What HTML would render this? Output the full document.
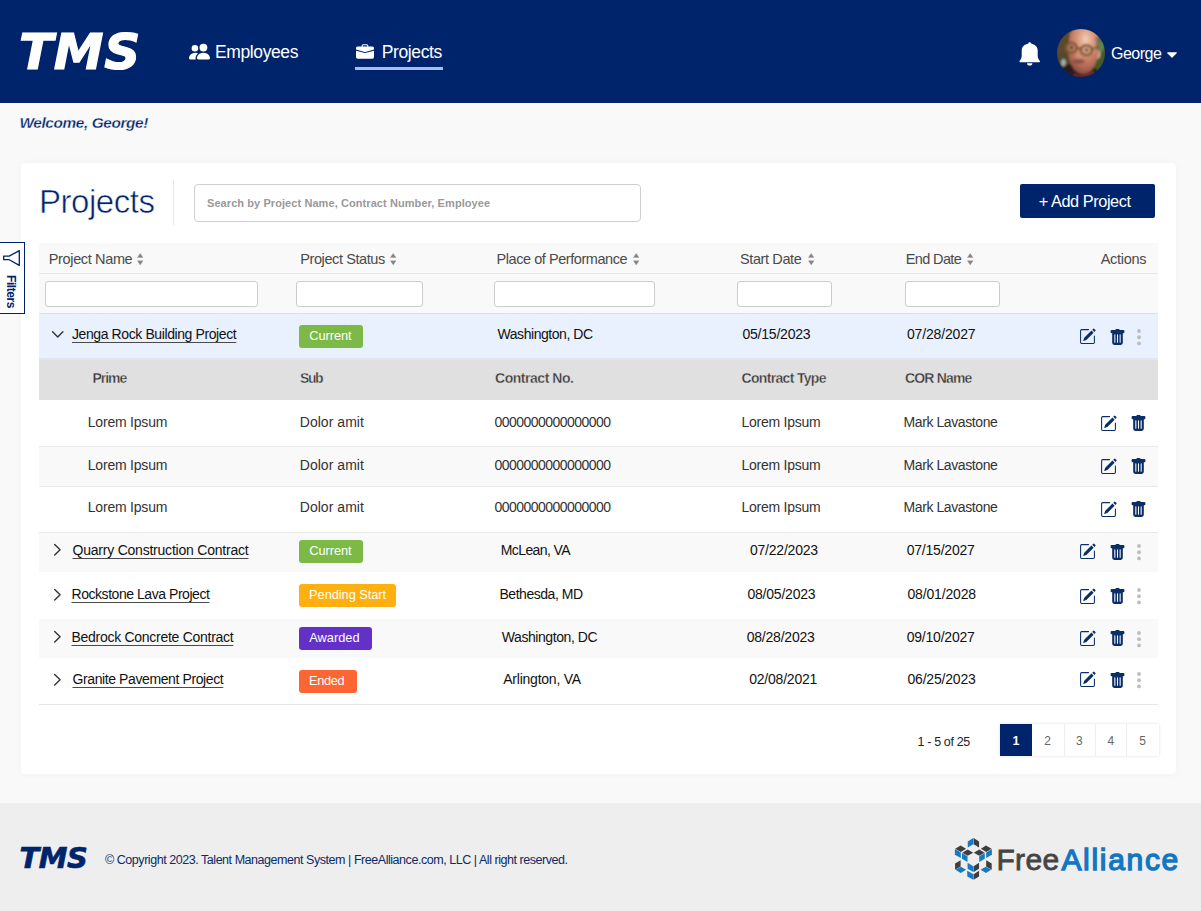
<!DOCTYPE html>
<html lang="en">
<head>
<meta charset="utf-8">
<title>TMS - Projects</title>
<style>
*{box-sizing:border-box;margin:0;padding:0}
html,body{width:1201px;height:911px;overflow:hidden}
body{position:relative;background:#f9f9f9;font-family:"Liberation Sans","DejaVu Sans",sans-serif}
.t{position:absolute;white-space:nowrap;line-height:20px;height:20px}
.lnk{text-decoration:underline;text-decoration-thickness:1px;text-underline-offset:3px;text-decoration-color:#4a4a4a}
.b{position:absolute}
svg{position:absolute;overflow:visible}
</style>
</head>
<body>
<div id="shapes">
<div class="b" style="left:0px;top:0px;width:1201px;height:103px;background:#00246b"></div>
<div class="b" style="left:355px;top:67px;width:88px;height:3px;background:#a9bcf0"></div>
<svg style="left:189.2px;top:41.1px" width="21" height="21" viewBox="0 0 16 16" fill="#fff"><path d="M7 14s-1 0-1-1 1-4 5-4 5 3 5 4-1 1-1 1H7Zm4-6a3 3 0 1 0 0-6 3 3 0 0 0 0 6Zm-5.784 6A2.238 2.238 0 0 1 5 13c0-1.355.68-2.750 1.936-3.720A6.325 6.325 0 0 0 5 9c-4 0-5 3-5 4s1 1 1 1h4.216ZM4.500 8a2.500 2.500 0 1 0 0-5 2.500 2.500 0 0 0 0 5Z"/></svg>
<svg style="left:355.500px;top:42.500px" width="18" height="18" viewBox="0 0 16 16" fill="#fff"><path d="M6.500 1A1.500 1.500 0 0 0 5 2.500V3H1.500A1.500 1.500 0 0 0 0 4.500v1.384l7.614 2.030a1.500 1.500 0 0 0 .772 0L16 5.884V4.500A1.500 1.500 0 0 0 14.500 3H11v-.5A1.500 1.500 0 0 0 9.500 1h-3zm0 1h3a.5.5 0 0 1 .5.5V3H6v-.5a.5.5 0 0 1 .5-.5z"/><path d="M0 12.500A1.500 1.500 0 0 0 1.500 14h13a1.500 1.500 0 0 0 1.500-1.500V6.850L8.129 8.947a.5.5 0 0 1-.258 0L0 6.850v5.650z"/></svg>
<svg style="left:1018px;top:40px" width="24" height="27" viewBox="0 0 24 27" fill="#fff"><path d="M11.700 2.300C12.500 2.300 13 2.800 13.100 3.400C16.800 4.300 19.700 6.500 19.700 10.600V16C19.700 17.800 20.500 19.400 21.800 21C22.300 21.600 22 22.200 21.300 22.200H2.100C1.400 22.200 1.100 21.600 1.600 21C2.900 19.400 3.700 17.800 3.700 16V10.600C3.700 6.500 6.600 4.300 10.300 3.400C10.400 2.800 10.900 2.300 11.700 2.300Z"/><path d="M9 23.300H14.400C14.400 24.700 13.200 25.600 11.700 25.600C10.200 25.600 9 24.700 9 23.300Z"/></svg>
<svg style="left:1057px;top:28.800px" width="48" height="48" viewBox="0 0 48 48">
<defs><clipPath id="av"><circle cx="24" cy="24" r="24"/></clipPath>
<filter id="bl" x="-10%" y="-10%" width="120%" height="120%"><feGaussianBlur stdDeviation="0.900"/></filter>
<radialGradient id="fg" cx="58%" cy="28%" r="75%"><stop offset="0" stop-color="#f3cdb6"/><stop offset="0.350" stop-color="#d9987c"/><stop offset="0.750" stop-color="#b56a55"/><stop offset="1" stop-color="#8a4a3c"/></radialGradient></defs>
<g clip-path="url(#av)"><g filter="url(#bl)">
<rect x="-4" y="-4" width="56" height="56" fill="#4d4a2e"/>
<rect x="-4" y="-4" width="16" height="30" fill="#5a4a2c"/>
<rect x="36" y="4" width="16" height="40" fill="#3f5a2c"/>
<ellipse cx="44.500" cy="17" rx="2.500" ry="6" fill="#5f8a48"/>
<ellipse cx="6.500" cy="33.500" rx="2.200" ry="3.500" fill="#aab0a8"/>
<ellipse cx="40.500" cy="25" rx="3" ry="5" fill="#d9a58c"/>
<path d="M10.500 14C10.500 4 17-3 27-3S42.500 4 42 15C41.500 26 40 33 36 39C33 43.500 29 45 25.500 45C21 45 16 42 13.500 35C11.500 29 10.500 22 10.500 14Z" fill="url(#fg)"/>
<path d="M40 8C42 12 42.500 17 42 22L39.500 21C40 16 39.500 12 38 9Z" fill="#7a6a60"/>
<path d="M10.500 6C9.500 10 9.500 14 10 18L12 17C11.500 13 12 9 13 6Z" fill="#5a4038"/>
<path d="M4 40C8 36 12 34.500 14 35C16 41 21 45 26 45C30 45 34 43 36.500 39C40 40 43 42 45 45V52H0Z" fill="#2a1b1a"/>
<path d="M17 44C21 46.500 30 46.500 36.500 41L38 48H16Z" fill="#6c2a2a"/>
<ellipse cx="21.500" cy="32.500" rx="6.500" ry="2.200" fill="#8a5144"/>
<ellipse cx="22" cy="27" rx="3.200" ry="2.200" fill="#d08e78"/>
<ellipse cx="14.200" cy="18.700" rx="5.600" ry="5" fill="#a87a62" fill-opacity=".55" stroke="#7a5526" stroke-width="2.200"/>
<ellipse cx="29.400" cy="21.200" rx="5.600" ry="5" fill="#c69a84" fill-opacity=".55" stroke="#7a5526" stroke-width="2.200"/>
<path d="M19.800 19.500Q22 18.500 23.800 20.500" stroke="#6a4520" stroke-width="1.800" fill="none"/>
<path d="M35 20.500L41.500 17" stroke="#7a5526" stroke-width="1.500"/>
<circle cx="14.500" cy="18.500" r="1.400" fill="#3a2a22"/><circle cx="29.500" cy="21" r="1.400" fill="#3a2a22"/>
</g></g></svg>
<svg style="left:1167.400px;top:52.400px" width="10" height="6" viewBox="0 0 10 6"><path d="M0.700 0.300h8.600a.5.5 0 0 1 .4.850L5.450 5.500a.6.600 0 0 1-.9 0L0.300 1.150a.5.5 0 0 1 .4-.85z" fill="#fff"/></svg>
<div class="b" style="left:21px;top:163px;width:1155px;height:611px;background:#fff;border-radius:4px;box-shadow:0 0 9px rgba(0,0,0,.035)"></div>
<div class="b" style="left:173px;top:180px;width:1px;height:45px;background:#e8e8e8"></div>
<div class="b" style="left:194px;top:184px;width:447px;height:38px;background:#fff;border:1px solid #cfcfcf;border-radius:4px"></div>
<div class="b" style="left:1020px;top:184px;width:135px;height:34px;background:#00246b;border-radius:2px"></div>
<div class="b" style="left:-1px;top:242px;width:26px;height:72px;background:#fff;border:1px solid #00246b"></div>
<svg style="left:3px;top:250px" width="17" height="16" viewBox="0 0 17 16" fill="none" stroke="#00246b" stroke-width="1.300" stroke-linejoin="round" stroke-linecap="round"><path d="M16.300 0.600V15.400L6.200 9.700H0.700V6.100H6.200Z"/></svg>
<div class="t" style="left:1px;top:274.500px;width:20px;height:34px;writing-mode:vertical-rl;font-size:12px;font-weight:bold;color:#00246b;line-height:20px;letter-spacing:-0.450px" id="filt">Filters</div>
<div class="b" style="left:39px;top:243px;width:1119px;height:31px;background:#f9f9f9;border-bottom:1px solid #e6e6e6"></div>
<div class="b" style="left:39px;top:274px;width:1119px;height:40px;background:#f9f9f9;border-bottom:1px solid #dedede"></div>
<div class="b" style="left:39px;top:314px;width:1119px;height:46px;background:#e9f0fe;border-bottom:2px solid #dfe6f3"></div>
<div class="b" style="left:39px;top:360px;width:1119px;height:40px;background:#e0e0e0"></div>
<div class="b" style="left:39px;top:400px;width:1119px;height:47px;background:#fff;border-bottom:1px solid #e9e9e9"></div>
<div class="b" style="left:39px;top:447px;width:1119px;height:40px;background:#f9f9f9;border-bottom:1px solid #e9e9e9"></div>
<div class="b" style="left:39px;top:487px;width:1119px;height:46px;background:#fff;border-bottom:1px solid #e9e9e9"></div>
<div class="b" style="left:39px;top:533px;width:1119px;height:39px;background:#f9f9f9"></div>
<div class="b" style="left:39px;top:572px;width:1119px;height:47px;background:#fff"></div>
<div class="b" style="left:39px;top:619px;width:1119px;height:39px;background:#f9f9f9"></div>
<div class="b" style="left:39px;top:658px;width:1119px;height:47px;background:#fff;border-bottom:1px solid #e6e6e6"></div>
<svg style="left:137.2px;top:253.100px" width="6.400" height="12.300" viewBox="0 0 6.400 12.300" fill="#858585" stroke="#858585" stroke-width="0.300" stroke-linejoin="round"><path d="M3.200 0.400L6 4.500H0.400Z"/><path d="M3.200 11.900L6 7.800H0.400Z"/></svg>
<svg style="left:390.2px;top:253.100px" width="6.400" height="12.300" viewBox="0 0 6.400 12.300" fill="#858585" stroke="#858585" stroke-width="0.300" stroke-linejoin="round"><path d="M3.200 0.400L6 4.500H0.400Z"/><path d="M3.200 11.900L6 7.800H0.400Z"/></svg>
<svg style="left:633.4px;top:253.100px" width="6.400" height="12.300" viewBox="0 0 6.400 12.300" fill="#858585" stroke="#858585" stroke-width="0.300" stroke-linejoin="round"><path d="M3.200 0.400L6 4.500H0.400Z"/><path d="M3.200 11.900L6 7.800H0.400Z"/></svg>
<svg style="left:807.6px;top:253.100px" width="6.400" height="12.300" viewBox="0 0 6.400 12.300" fill="#858585" stroke="#858585" stroke-width="0.300" stroke-linejoin="round"><path d="M3.200 0.400L6 4.500H0.400Z"/><path d="M3.200 11.900L6 7.800H0.400Z"/></svg>
<svg style="left:967.1px;top:253.100px" width="6.400" height="12.300" viewBox="0 0 6.400 12.300" fill="#858585" stroke="#858585" stroke-width="0.300" stroke-linejoin="round"><path d="M3.200 0.400L6 4.500H0.400Z"/><path d="M3.200 11.900L6 7.800H0.400Z"/></svg>
<div class="b" style="left:45px;top:281px;width:213px;height:26px;background:#fff;border:1px solid #ccc;border-radius:3px"></div>
<div class="b" style="left:296px;top:281px;width:127px;height:26px;background:#fff;border:1px solid #ccc;border-radius:3px"></div>
<div class="b" style="left:494px;top:281px;width:161px;height:26px;background:#fff;border:1px solid #ccc;border-radius:3px"></div>
<div class="b" style="left:737px;top:281px;width:95px;height:26px;background:#fff;border:1px solid #ccc;border-radius:3px"></div>
<div class="b" style="left:905px;top:281px;width:95px;height:26px;background:#fff;border:1px solid #ccc;border-radius:3px"></div>
<svg style="left:52px;top:331px" width="11.500" height="7" viewBox="0 0 11.500 7" fill="none" stroke="#333" stroke-width="1.400" stroke-linecap="round" stroke-linejoin="round"><path d="M0.600 0.700L5.750 6.100L10.900 0.700"/></svg>
<svg style="left:53.800px;top:544.45px" width="7" height="11.500" viewBox="0 0 7 11.500" fill="none" stroke="#333" stroke-width="1.400" stroke-linecap="round" stroke-linejoin="round"><path d="M0.700 0.600L6.100 5.750L0.700 10.900"/></svg>
<svg style="left:53.800px;top:588.75px" width="7" height="11.500" viewBox="0 0 7 11.500" fill="none" stroke="#333" stroke-width="1.400" stroke-linecap="round" stroke-linejoin="round"><path d="M0.700 0.600L6.100 5.750L0.700 10.900"/></svg>
<svg style="left:53.800px;top:631.45px" width="7" height="11.500" viewBox="0 0 7 11.500" fill="none" stroke="#333" stroke-width="1.400" stroke-linecap="round" stroke-linejoin="round"><path d="M0.700 0.600L6.100 5.750L0.700 10.900"/></svg>
<svg style="left:53.800px;top:673.75px" width="7" height="11.500" viewBox="0 0 7 11.500" fill="none" stroke="#333" stroke-width="1.400" stroke-linecap="round" stroke-linejoin="round"><path d="M0.700 0.600L6.100 5.750L0.700 10.900"/></svg>
<div class="b" style="left:299px;top:325px;width:64px;height:23px;background:#7cb947;border-radius:3px"></div>
<div class="b" style="left:299px;top:540px;width:64px;height:23px;background:#7cb947;border-radius:3px"></div>
<div class="b" style="left:299px;top:584px;width:96.5px;height:23px;background:#fdb00f;border-radius:3px"></div>
<div class="b" style="left:299px;top:627px;width:72.8px;height:23px;background:#6431c8;border-radius:3px"></div>
<div class="b" style="left:299px;top:670px;width:57.5px;height:23px;background:#fd6533;border-radius:3px"></div>
<svg style="left:1078.9px;top:328.25px" width="17" height="17" viewBox="0 0 16 16" fill="#0a2f66"><path d="M15.502 1.940a.5.5 0 0 1 0 .706L14.459 3.690l-2-2L13.502.646a.5.5 0 0 1 .707 0l1.293 1.293zm-1.750 2.456-2-2L4.939 9.210a.5.5 0 0 0-.121.196l-.805 2.414a.25.250 0 0 0 .316.316l2.414-.805a.5.5 0 0 0 .196-.120l6.813-6.814z"/><path fill-rule="evenodd" d="M1 13.500A1.500 1.500 0 0 0 2.500 15h11a1.500 1.500 0 0 0 1.500-1.500v-6a.5.5 0 0 0-1 0v6a.5.5 0 0 1-.5.5h-11a.5.5 0 0 1-.5-.5v-11a.5.5 0 0 1 .5-.5H9a.5.5 0 0 0 0-1H2.500A1.500 1.500 0 0 0 1 2.500v11z"/></svg>
<svg style="left:1108.7px;top:328.65px" width="17" height="17" viewBox="0 0 16 16" fill="#0a2f66"><path d="M2.500 1a1 1 0 0 0-1 1v1a1 1 0 0 0 1 1H3v9a2 2 0 0 0 2 2h6a2 2 0 0 0 2-2V4h.5a1 1 0 0 0 1-1V2a1 1 0 0 0-1-1H10a1 1 0 0 0-1-1H7a1 1 0 0 0-1 1H2.500zm3 4a.5.5 0 0 1 .5.5v7a.5.5 0 0 1-1 0v-7a.5.5 0 0 1 .5-.5zM8 5a.5.5 0 0 1 .5.5v7a.5.5 0 0 1-1 0v-7A.5.5 0 0 1 8 5zm3 .5v7a.5.5 0 0 1-1 0v-7a.5.5 0 0 1 1 0z"/></svg>
<svg style="left:1137px;top:328.75px" width="4" height="16.500" viewBox="0 0 4 16.500" fill="#bdbdbd"><circle cx="2" cy="2" r="1.900"/><circle cx="2" cy="8.250" r="1.900"/><circle cx="2" cy="14.400" r="1.900"/></svg>
<svg style="left:1100.2px;top:415.00px" width="17" height="17" viewBox="0 0 16 16" fill="#0a2f66"><path d="M15.502 1.940a.5.5 0 0 1 0 .706L14.459 3.690l-2-2L13.502.646a.5.5 0 0 1 .707 0l1.293 1.293zm-1.750 2.456-2-2L4.939 9.210a.5.5 0 0 0-.121.196l-.805 2.414a.25.250 0 0 0 .316.316l2.414-.805a.5.5 0 0 0 .196-.120l6.813-6.814z"/><path fill-rule="evenodd" d="M1 13.500A1.500 1.500 0 0 0 2.500 15h11a1.500 1.500 0 0 0 1.500-1.500v-6a.5.5 0 0 0-1 0v6a.5.5 0 0 1-.5.5h-11a.5.5 0 0 1-.5-.5v-11a.5.5 0 0 1 .5-.5H9a.5.5 0 0 0 0-1H2.500A1.500 1.500 0 0 0 1 2.500v11z"/></svg>
<svg style="left:1129.5px;top:415.40px" width="17" height="17" viewBox="0 0 16 16" fill="#0a2f66"><path d="M2.500 1a1 1 0 0 0-1 1v1a1 1 0 0 0 1 1H3v9a2 2 0 0 0 2 2h6a2 2 0 0 0 2-2V4h.5a1 1 0 0 0 1-1V2a1 1 0 0 0-1-1H10a1 1 0 0 0-1-1H7a1 1 0 0 0-1 1H2.500zm3 4a.5.5 0 0 1 .5.5v7a.5.5 0 0 1-1 0v-7a.5.5 0 0 1 .5-.5zM8 5a.5.5 0 0 1 .5.5v7a.5.5 0 0 1-1 0v-7A.5.5 0 0 1 8 5zm3 .5v7a.5.5 0 0 1-1 0v-7a.5.5 0 0 1 1 0z"/></svg>
<svg style="left:1100.2px;top:458.00px" width="17" height="17" viewBox="0 0 16 16" fill="#0a2f66"><path d="M15.502 1.940a.5.5 0 0 1 0 .706L14.459 3.690l-2-2L13.502.646a.5.5 0 0 1 .707 0l1.293 1.293zm-1.750 2.456-2-2L4.939 9.210a.5.5 0 0 0-.121.196l-.805 2.414a.25.250 0 0 0 .316.316l2.414-.805a.5.5 0 0 0 .196-.120l6.813-6.814z"/><path fill-rule="evenodd" d="M1 13.500A1.500 1.500 0 0 0 2.500 15h11a1.500 1.500 0 0 0 1.500-1.500v-6a.5.5 0 0 0-1 0v6a.5.5 0 0 1-.5.5h-11a.5.5 0 0 1-.5-.5v-11a.5.5 0 0 1 .5-.5H9a.5.5 0 0 0 0-1H2.500A1.500 1.500 0 0 0 1 2.500v11z"/></svg>
<svg style="left:1129.5px;top:458.40px" width="17" height="17" viewBox="0 0 16 16" fill="#0a2f66"><path d="M2.500 1a1 1 0 0 0-1 1v1a1 1 0 0 0 1 1H3v9a2 2 0 0 0 2 2h6a2 2 0 0 0 2-2V4h.5a1 1 0 0 0 1-1V2a1 1 0 0 0-1-1H10a1 1 0 0 0-1-1H7a1 1 0 0 0-1 1H2.500zm3 4a.5.5 0 0 1 .5.5v7a.5.5 0 0 1-1 0v-7a.5.5 0 0 1 .5-.5zM8 5a.5.5 0 0 1 .5.5v7a.5.5 0 0 1-1 0v-7A.5.5 0 0 1 8 5zm3 .5v7a.5.5 0 0 1-1 0v-7a.5.5 0 0 1 1 0z"/></svg>
<svg style="left:1100.2px;top:500.90px" width="17" height="17" viewBox="0 0 16 16" fill="#0a2f66"><path d="M15.502 1.940a.5.5 0 0 1 0 .706L14.459 3.690l-2-2L13.502.646a.5.5 0 0 1 .707 0l1.293 1.293zm-1.750 2.456-2-2L4.939 9.210a.5.5 0 0 0-.121.196l-.805 2.414a.25.250 0 0 0 .316.316l2.414-.805a.5.5 0 0 0 .196-.120l6.813-6.814z"/><path fill-rule="evenodd" d="M1 13.500A1.500 1.500 0 0 0 2.500 15h11a1.500 1.500 0 0 0 1.500-1.500v-6a.5.5 0 0 0-1 0v6a.5.5 0 0 1-.5.5h-11a.5.5 0 0 1-.5-.5v-11a.5.5 0 0 1 .5-.5H9a.5.5 0 0 0 0-1H2.500A1.500 1.500 0 0 0 1 2.500v11z"/></svg>
<svg style="left:1129.5px;top:501.30px" width="17" height="17" viewBox="0 0 16 16" fill="#0a2f66"><path d="M2.500 1a1 1 0 0 0-1 1v1a1 1 0 0 0 1 1H3v9a2 2 0 0 0 2 2h6a2 2 0 0 0 2-2V4h.5a1 1 0 0 0 1-1V2a1 1 0 0 0-1-1H10a1 1 0 0 0-1-1H7a1 1 0 0 0-1 1H2.500zm3 4a.5.5 0 0 1 .5.5v7a.5.5 0 0 1-1 0v-7a.5.5 0 0 1 .5-.5zM8 5a.5.5 0 0 1 .5.5v7a.5.5 0 0 1-1 0v-7A.5.5 0 0 1 8 5zm3 .5v7a.5.5 0 0 1-1 0v-7a.5.5 0 0 1 1 0z"/></svg>
<svg style="left:1078.9px;top:543.25px" width="17" height="17" viewBox="0 0 16 16" fill="#0a2f66"><path d="M15.502 1.940a.5.5 0 0 1 0 .706L14.459 3.690l-2-2L13.502.646a.5.5 0 0 1 .707 0l1.293 1.293zm-1.750 2.456-2-2L4.939 9.210a.5.5 0 0 0-.121.196l-.805 2.414a.25.250 0 0 0 .316.316l2.414-.805a.5.5 0 0 0 .196-.120l6.813-6.814z"/><path fill-rule="evenodd" d="M1 13.500A1.500 1.500 0 0 0 2.500 15h11a1.500 1.500 0 0 0 1.500-1.500v-6a.5.5 0 0 0-1 0v6a.5.5 0 0 1-.5.5h-11a.5.5 0 0 1-.5-.5v-11a.5.5 0 0 1 .5-.5H9a.5.5 0 0 0 0-1H2.500A1.500 1.500 0 0 0 1 2.500v11z"/></svg>
<svg style="left:1108.7px;top:543.65px" width="17" height="17" viewBox="0 0 16 16" fill="#0a2f66"><path d="M2.500 1a1 1 0 0 0-1 1v1a1 1 0 0 0 1 1H3v9a2 2 0 0 0 2 2h6a2 2 0 0 0 2-2V4h.5a1 1 0 0 0 1-1V2a1 1 0 0 0-1-1H10a1 1 0 0 0-1-1H7a1 1 0 0 0-1 1H2.500zm3 4a.5.5 0 0 1 .5.5v7a.5.5 0 0 1-1 0v-7a.5.5 0 0 1 .5-.5zM8 5a.5.5 0 0 1 .5.5v7a.5.5 0 0 1-1 0v-7A.5.5 0 0 1 8 5zm3 .5v7a.5.5 0 0 1-1 0v-7a.5.5 0 0 1 1 0z"/></svg>
<svg style="left:1137px;top:543.75px" width="4" height="16.500" viewBox="0 0 4 16.500" fill="#bdbdbd"><circle cx="2" cy="2" r="1.900"/><circle cx="2" cy="8.250" r="1.900"/><circle cx="2" cy="14.400" r="1.900"/></svg>
<svg style="left:1078.9px;top:587.75px" width="17" height="17" viewBox="0 0 16 16" fill="#0a2f66"><path d="M15.502 1.940a.5.5 0 0 1 0 .706L14.459 3.690l-2-2L13.502.646a.5.5 0 0 1 .707 0l1.293 1.293zm-1.750 2.456-2-2L4.939 9.210a.5.5 0 0 0-.121.196l-.805 2.414a.25.250 0 0 0 .316.316l2.414-.805a.5.5 0 0 0 .196-.120l6.813-6.814z"/><path fill-rule="evenodd" d="M1 13.500A1.500 1.500 0 0 0 2.500 15h11a1.500 1.500 0 0 0 1.500-1.500v-6a.5.5 0 0 0-1 0v6a.5.5 0 0 1-.5.5h-11a.5.5 0 0 1-.5-.5v-11a.5.5 0 0 1 .5-.5H9a.5.5 0 0 0 0-1H2.500A1.500 1.500 0 0 0 1 2.500v11z"/></svg>
<svg style="left:1108.7px;top:588.15px" width="17" height="17" viewBox="0 0 16 16" fill="#0a2f66"><path d="M2.500 1a1 1 0 0 0-1 1v1a1 1 0 0 0 1 1H3v9a2 2 0 0 0 2 2h6a2 2 0 0 0 2-2V4h.5a1 1 0 0 0 1-1V2a1 1 0 0 0-1-1H10a1 1 0 0 0-1-1H7a1 1 0 0 0-1 1H2.500zm3 4a.5.5 0 0 1 .5.5v7a.5.5 0 0 1-1 0v-7a.5.5 0 0 1 .5-.5zM8 5a.5.5 0 0 1 .5.5v7a.5.5 0 0 1-1 0v-7A.5.5 0 0 1 8 5zm3 .5v7a.5.5 0 0 1-1 0v-7a.5.5 0 0 1 1 0z"/></svg>
<svg style="left:1137px;top:588.25px" width="4" height="16.500" viewBox="0 0 4 16.500" fill="#bdbdbd"><circle cx="2" cy="2" r="1.900"/><circle cx="2" cy="8.250" r="1.900"/><circle cx="2" cy="14.400" r="1.900"/></svg>
<svg style="left:1078.9px;top:630.00px" width="17" height="17" viewBox="0 0 16 16" fill="#0a2f66"><path d="M15.502 1.940a.5.5 0 0 1 0 .706L14.459 3.690l-2-2L13.502.646a.5.5 0 0 1 .707 0l1.293 1.293zm-1.750 2.456-2-2L4.939 9.210a.5.5 0 0 0-.121.196l-.805 2.414a.25.250 0 0 0 .316.316l2.414-.805a.5.5 0 0 0 .196-.120l6.813-6.814z"/><path fill-rule="evenodd" d="M1 13.500A1.500 1.500 0 0 0 2.500 15h11a1.500 1.500 0 0 0 1.500-1.500v-6a.5.5 0 0 0-1 0v6a.5.5 0 0 1-.5.5h-11a.5.5 0 0 1-.5-.5v-11a.5.5 0 0 1 .5-.5H9a.5.5 0 0 0 0-1H2.500A1.500 1.500 0 0 0 1 2.500v11z"/></svg>
<svg style="left:1108.7px;top:630.40px" width="17" height="17" viewBox="0 0 16 16" fill="#0a2f66"><path d="M2.500 1a1 1 0 0 0-1 1v1a1 1 0 0 0 1 1H3v9a2 2 0 0 0 2 2h6a2 2 0 0 0 2-2V4h.5a1 1 0 0 0 1-1V2a1 1 0 0 0-1-1H10a1 1 0 0 0-1-1H7a1 1 0 0 0-1 1H2.500zm3 4a.5.5 0 0 1 .5.5v7a.5.5 0 0 1-1 0v-7a.5.5 0 0 1 .5-.5zM8 5a.5.5 0 0 1 .5.5v7a.5.5 0 0 1-1 0v-7A.5.5 0 0 1 8 5zm3 .5v7a.5.5 0 0 1-1 0v-7a.5.5 0 0 1 1 0z"/></svg>
<svg style="left:1137px;top:630.50px" width="4" height="16.500" viewBox="0 0 4 16.500" fill="#bdbdbd"><circle cx="2" cy="2" r="1.900"/><circle cx="2" cy="8.250" r="1.900"/><circle cx="2" cy="14.400" r="1.900"/></svg>
<svg style="left:1078.9px;top:671.25px" width="17" height="17" viewBox="0 0 16 16" fill="#0a2f66"><path d="M15.502 1.940a.5.5 0 0 1 0 .706L14.459 3.690l-2-2L13.502.646a.5.5 0 0 1 .707 0l1.293 1.293zm-1.750 2.456-2-2L4.939 9.210a.5.5 0 0 0-.121.196l-.805 2.414a.25.250 0 0 0 .316.316l2.414-.805a.5.5 0 0 0 .196-.120l6.813-6.814z"/><path fill-rule="evenodd" d="M1 13.500A1.500 1.500 0 0 0 2.500 15h11a1.500 1.500 0 0 0 1.500-1.500v-6a.5.5 0 0 0-1 0v6a.5.5 0 0 1-.5.5h-11a.5.5 0 0 1-.5-.5v-11a.5.5 0 0 1 .5-.5H9a.5.5 0 0 0 0-1H2.500A1.500 1.500 0 0 0 1 2.500v11z"/></svg>
<svg style="left:1108.7px;top:671.65px" width="17" height="17" viewBox="0 0 16 16" fill="#0a2f66"><path d="M2.500 1a1 1 0 0 0-1 1v1a1 1 0 0 0 1 1H3v9a2 2 0 0 0 2 2h6a2 2 0 0 0 2-2V4h.5a1 1 0 0 0 1-1V2a1 1 0 0 0-1-1H10a1 1 0 0 0-1-1H7a1 1 0 0 0-1 1H2.500zm3 4a.5.5 0 0 1 .5.5v7a.5.5 0 0 1-1 0v-7a.5.5 0 0 1 .5-.5zM8 5a.5.5 0 0 1 .5.5v7a.5.5 0 0 1-1 0v-7A.5.5 0 0 1 8 5zm3 .5v7a.5.5 0 0 1-1 0v-7a.5.5 0 0 1 1 0z"/></svg>
<svg style="left:1137px;top:671.75px" width="4" height="16.500" viewBox="0 0 4 16.500" fill="#bdbdbd"><circle cx="2" cy="2" r="1.900"/><circle cx="2" cy="8.250" r="1.900"/><circle cx="2" cy="14.400" r="1.900"/></svg>
<div class="b" style="left:1000px;top:724px;width:159px;height:32px;background:#fff;box-shadow:0 0 3px rgba(0,0,0,.13)"></div>
<div class="b" style="left:1000px;top:724px;width:32px;height:32px;background:#00246b"></div>
<div class="b" style="left:1063.5px;top:724px;width:1px;height:32px;background:#eee"></div>
<div class="b" style="left:1095px;top:724px;width:1px;height:32px;background:#eee"></div>
<div class="b" style="left:1126px;top:724px;width:1px;height:32px;background:#eee"></div>
<div class="b" style="left:0px;top:803px;width:1201px;height:108px;background:#eee"></div>
<svg style="left:945px;top:830px" width="60" height="60" viewBox="0 0 911 911"><polygon fill="#1579c4" points="345,175 430,122 430,215 345,265"/><polygon fill="#3e3e40" points="435,122 517,175 517,265 435,215"/><polygon fill="#3e3e40" points="155,285 237,235 320,285 240,335"/><polygon fill="#1579c4" points="150,290 240,342 240,427 150,377"/><polygon fill="#3e3e40" points="262,345 345,295 427,345 345,392"/><polygon fill="#1579c4" points="258,350 342,398 342,487 258,437"/><polygon fill="#3e3e40" points="438,345 520,295 602,345 520,392"/><polygon fill="#1579c4" points="520,398 604,350 604,437 520,487"/><polygon fill="#3e3e40" points="545,285 622,235 707,285 625,335"/><polygon fill="#1579c4" points="625,342 712,290 712,377 625,427"/><polygon fill="#3e3e40" points="153,510 237,460 237,555 153,602"/><polygon fill="#1579c4" points="160,605 240,558 320,603 238,654"/><polygon fill="#3e3e40" points="625,460 709,510 709,602 625,555"/><polygon fill="#1579c4" points="540,603 620,558 702,605 622,654"/><polygon fill="#1579c4" points="343,498 430,550 430,637 343,590"/><polygon fill="#3e3e40" points="435,550 517,498 517,590 435,637"/><polygon fill="#1579c4" points="338,620 430,670 430,757 338,707"/><polygon fill="#3e3e40" points="435,670 517,620 517,707 435,757"/></svg>
</div>
<header>
<div class="t" style='left:19.10px;top:42.25px;font-size:50px;letter-spacing:0.619px;color:#fff;font-weight:bold;font-style:oblique;font-family:"DejaVu Sans","Liberation Sans",sans-serif;-webkit-text-stroke:1.2px #fff'>TMS</div>
<div class="t" style='left:215.00px;top:42.25px;font-size:17.5px;letter-spacing:-0.390px;color:#fff'>Employees</div>
<div class="t" style='left:381.80px;top:42.25px;font-size:17.5px;letter-spacing:-0.395px;color:#fff'>Projects</div>
<div class="t" style='left:1111.00px;top:43.75px;font-size:16px;letter-spacing:-0.494px;color:#fff'>George</div>
</header>
<main>
<div class="t" style='left:19.40px;top:112.75px;font-size:15.4px;letter-spacing:-0.395px;color:#00246b;font-weight:bold;font-style:italic;-webkit-text-stroke:0.3px #f9f9f9'>Welcome, George!</div>
<div class="t" style='left:39.10px;top:191.75px;font-size:33px;letter-spacing:-0.487px;color:#00246b;-webkit-text-stroke:0.55px #fff'>Projects</div>
<div class="t" style='left:207.00px;top:193.25px;font-size:11px;letter-spacing:0.078px;color:#999;font-weight:bold'>Search by Project Name, Contract Number, Employee</div>
<div class="t" style='left:1038.80px;top:191.25px;font-size:16.3px;letter-spacing:-0.431px;color:#fff'>+ Add Project</div>
<div class="t" style='left:48.80px;top:249.25px;font-size:14.5px;letter-spacing:-0.361px;color:#4a4a4a'>Project Name</div>
<div class="t" style='left:300.25px;top:249.25px;font-size:14.5px;letter-spacing:-0.405px;color:#4a4a4a'>Project Status</div>
<div class="t" style='left:496.50px;top:249.25px;font-size:14.5px;letter-spacing:-0.440px;color:#4a4a4a'>Place of Performance</div>
<div class="t" style='left:740.00px;top:249.25px;font-size:14.5px;letter-spacing:-0.385px;color:#4a4a4a'>Start Date</div>
<div class="t" style='left:905.75px;top:249.25px;font-size:14.5px;letter-spacing:-0.628px;color:#4a4a4a'>End Date</div>
<div class="t" style='left:1100.75px;top:249.25px;font-size:14.5px;letter-spacing:-0.300px;color:#4a4a4a'>Actions</div>
<div class="t lnk" style='left:72.00px;top:324.25px;font-size:14px;letter-spacing:-0.402px;color:#111'>Jenga Rock Building Project</div>
<div class="t" style='left:497.50px;top:324.25px;font-size:14px;letter-spacing:-0.446px;color:#111'>Washington, DC</div>
<div class="t" style='left:742.50px;top:324.25px;font-size:14px;letter-spacing:-0.226px;color:#111'>05/15/2023</div>
<div class="t" style='left:907.00px;top:324.25px;font-size:14px;letter-spacing:-0.170px;color:#111'>07/28/2027</div>
<div class="t" style='left:92.50px;top:368.25px;font-size:14px;letter-spacing:-1.031px;color:#333;font-weight:bold;-webkit-text-stroke:0.35px #e0e0e0'>Prime</div>
<div class="t" style='left:300.00px;top:368.25px;font-size:14px;letter-spacing:-1.445px;color:#333;font-weight:bold;-webkit-text-stroke:0.35px #e0e0e0'>Sub</div>
<div class="t" style='left:495.00px;top:368.25px;font-size:14px;letter-spacing:-0.465px;color:#333;font-weight:bold;-webkit-text-stroke:0.35px #e0e0e0'>Contract No.</div>
<div class="t" style='left:741.50px;top:368.25px;font-size:14px;letter-spacing:-0.671px;color:#333;font-weight:bold;-webkit-text-stroke:0.35px #e0e0e0'>Contract Type</div>
<div class="t" style='left:905.00px;top:368.25px;font-size:14px;letter-spacing:-0.835px;color:#333;font-weight:bold;-webkit-text-stroke:0.35px #e0e0e0'>COR Name</div>
<div class="t" style='left:87.75px;top:412.25px;font-size:14px;letter-spacing:-0.203px;color:#333'>Lorem Ipsum</div>
<div class="t" style='left:299.75px;top:412.25px;font-size:14px;letter-spacing:0.039px;color:#333'>Dolor amit</div>
<div class="t" style='left:494.50px;top:412.25px;font-size:14px;letter-spacing:-0.536px;color:#333'>0000000000000000</div>
<div class="t" style='left:741.50px;top:412.25px;font-size:14px;letter-spacing:-0.253px;color:#333'>Lorem Ipsum</div>
<div class="t" style='left:903.50px;top:412.25px;font-size:14px;letter-spacing:-0.409px;color:#333'>Mark Lavastone</div>
<div class="t" style='left:87.75px;top:455.25px;font-size:14px;letter-spacing:-0.203px;color:#333'>Lorem Ipsum</div>
<div class="t" style='left:299.75px;top:455.25px;font-size:14px;letter-spacing:0.039px;color:#333'>Dolor amit</div>
<div class="t" style='left:494.50px;top:455.25px;font-size:14px;letter-spacing:-0.536px;color:#333'>0000000000000000</div>
<div class="t" style='left:741.50px;top:455.25px;font-size:14px;letter-spacing:-0.253px;color:#333'>Lorem Ipsum</div>
<div class="t" style='left:903.50px;top:455.25px;font-size:14px;letter-spacing:-0.409px;color:#333'>Mark Lavastone</div>
<div class="t" style='left:87.75px;top:497.25px;font-size:14px;letter-spacing:-0.203px;color:#333'>Lorem Ipsum</div>
<div class="t" style='left:299.75px;top:497.25px;font-size:14px;letter-spacing:0.039px;color:#333'>Dolor amit</div>
<div class="t" style='left:494.50px;top:497.25px;font-size:14px;letter-spacing:-0.536px;color:#333'>0000000000000000</div>
<div class="t" style='left:741.50px;top:497.25px;font-size:14px;letter-spacing:-0.253px;color:#333'>Lorem Ipsum</div>
<div class="t" style='left:903.50px;top:497.25px;font-size:14px;letter-spacing:-0.409px;color:#333'>Mark Lavastone</div>
<div class="t lnk" style='left:72.50px;top:540.25px;font-size:14px;letter-spacing:-0.220px;color:#111'>Quarry Construction Contract</div>
<div class="t" style='left:500.75px;top:540.25px;font-size:14px;letter-spacing:-0.604px;color:#111'>McLean, VA</div>
<div class="t" style='left:750.00px;top:540.25px;font-size:14px;letter-spacing:-0.226px;color:#111'>07/22/2023</div>
<div class="t" style='left:906.75px;top:540.25px;font-size:14px;letter-spacing:-0.226px;color:#111'>07/15/2027</div>
<div class="t lnk" style='left:71.50px;top:584.25px;font-size:14px;letter-spacing:-0.451px;color:#111'>Rockstone Lava Project</div>
<div class="t" style='left:499.50px;top:584.25px;font-size:14px;letter-spacing:-0.464px;color:#111'>Bethesda, MD</div>
<div class="t" style='left:747.50px;top:584.25px;font-size:14px;letter-spacing:-0.226px;color:#111'>08/05/2023</div>
<div class="t" style='left:907.50px;top:584.25px;font-size:14px;letter-spacing:-0.170px;color:#111'>08/01/2028</div>
<div class="t lnk" style='left:71.50px;top:627.25px;font-size:14px;letter-spacing:-0.280px;color:#111'>Bedrock Concrete Contract</div>
<div class="t" style='left:501.75px;top:627.25px;font-size:14px;letter-spacing:-0.427px;color:#111'>Washington, DC</div>
<div class="t" style='left:746.75px;top:627.25px;font-size:14px;letter-spacing:-0.226px;color:#111'>08/28/2023</div>
<div class="t" style='left:906.75px;top:627.25px;font-size:14px;letter-spacing:-0.226px;color:#111'>09/10/2027</div>
<div class="t lnk" style='left:72.50px;top:669.25px;font-size:14px;letter-spacing:-0.398px;color:#111'>Granite Pavement Project</div>
<div class="t" style='left:503.25px;top:669.25px;font-size:14px;letter-spacing:-0.236px;color:#111'>Arlington, VA</div>
<div class="t" style='left:749.25px;top:669.25px;font-size:14px;letter-spacing:-0.226px;color:#111'>02/08/2021</div>
<div class="t" style='left:907.50px;top:669.25px;font-size:14px;letter-spacing:-0.198px;color:#111'>06/25/2023</div>
<div class="t" style='left:309.25px;top:325.75px;font-size:12.8px;letter-spacing:-0.061px;color:#fff'>Current</div>
<div class="t" style='left:309.25px;top:540.75px;font-size:12.8px;letter-spacing:-0.061px;color:#fff'>Current</div>
<div class="t" style='left:309.10px;top:584.75px;font-size:12.8px;letter-spacing:-0.041px;color:#fff'>Pending Start</div>
<div class="t" style='left:309.25px;top:627.75px;font-size:12.8px;letter-spacing:0.015px;color:#fff'>Awarded</div>
<div class="t" style='left:309.10px;top:670.75px;font-size:12.8px;letter-spacing:-0.347px;color:#fff'>Ended</div>
<div class="t" style='left:917.50px;top:732.25px;font-size:12.5px;letter-spacing:-0.358px;color:#222'>1 - 5 of 25</div>
<div class="t" style='left:1012.50px;top:731.25px;font-size:12.5px;letter-spacing:0.000px;color:#fff;font-weight:bold'>1</div>
<div class="t" style='left:1044.30px;top:731.25px;font-size:12px;letter-spacing:0.000px;color:#666'>2</div>
<div class="t" style='left:1076.00px;top:731.25px;font-size:12px;letter-spacing:0.000px;color:#666'>3</div>
<div class="t" style='left:1107.50px;top:731.25px;font-size:12px;letter-spacing:0.000px;color:#666'>4</div>
<div class="t" style='left:1139.20px;top:731.25px;font-size:12px;letter-spacing:0.000px;color:#666'>5</div>
</main>
<footer>
<div class="t" style='left:19.40px;top:848.25px;font-size:28.8px;letter-spacing:-0.350px;color:#00246b;font-weight:bold;font-style:oblique;font-family:"DejaVu Sans","Liberation Sans",sans-serif;-webkit-text-stroke:0.7px #00246b'>TMS</div>
<div class="t" style='left:105.00px;top:850.25px;font-size:12.5px;letter-spacing:-0.454px;color:#0a2a66'>© Copyright 2023. Talent Management System | FreeAlliance.com, LLC | All right reserved.</div>
<div class="t" style='left:996.40px;top:849.75px;font-size:30px;letter-spacing:0.400px;color:#454545;-webkit-text-stroke:0.8px #454545'>Free</div>
<div class="t" style='left:1061.40px;top:849.75px;font-size:30px;letter-spacing:1.689px;color:#1277c2;-webkit-text-stroke:1.3px #1277c2'>Alliance</div>
</footer>
</body>
</html>
